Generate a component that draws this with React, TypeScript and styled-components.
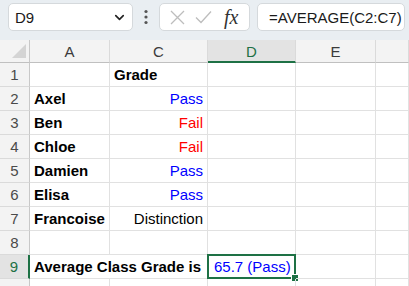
import { Fragment } from 'react';
import styled, { createGlobalStyle } from 'styled-components';
import { ChevronDown } from 'lucide-react';

const GREEN = '#1e7145';
const GRID = '#e1e1e1';

const Global = createGlobalStyle`
  html, body {
    margin: 0;
    padding: 0;
    background: #ffffff;
    font-family: "Liberation Sans", Arial, sans-serif;
    overflow: hidden;
  }
  * { box-sizing: border-box; }
`;

const Bar = styled.div`
  display: flex;
  align-items: flex-start;
  height: 40px;
  padding: 3px 0 0 8px;
  background: #e9eef2;
`;

const Field = styled.div<{ $w: number }>`
  display: flex;
  align-items: center;
  width: ${(p) => p.$w}px;
  height: 28px;
  background: #ffffff;
  border: 1px solid #d5d9dc;
  border-radius: 5px;
  font-size: 15px;
  color: #1a1a1a;
`;

const NameBox = styled(Field)`
  justify-content: space-between;
  padding: 0 5px 0 6px;
`;

const Dots = styled.div`
  width: 26px;
  height: 28px;
  display: flex;
  align-items: center;
  justify-content: center;
`;

const FxBox = styled(Field)`
  gap: 10px;
  padding: 0 0 0 10px;
`;

const Fx = styled.span`
  font-family: "Liberation Serif", "Times New Roman", serif;
  font-style: italic;
  font-size: 20px;
  color: #333333;
  margin-left: 2px;
`;

const FormulaBox = styled(Field)`
  margin-left: 7px;
  padding-left: 11px;
  white-space: nowrap;
`;

const Sheet = styled.div`
  display: grid;
  grid-template-columns: 30px 80px 98px 88px 80px 1fr;
  grid-template-rows: 23px;
  grid-auto-rows: 24px;
`;

const Corner = styled.div`
  background: #f3f3f3;
  border-right: 1px solid #c8c8c8;
  border-bottom: 1px solid #c0c0c0;
  display: flex;
  align-items: flex-end;
  justify-content: flex-end;
  padding: 0 3px 4px 0;
`;

const ColHead = styled.div<{ $active?: boolean }>`
  background: ${(p) => (p.$active ? '#e3e3e3' : '#f3f3f3')};
  border-right: 1px solid #dadada;
  border-bottom: ${(p) => (p.$active ? `2px solid ${GREEN}` : '1px solid #c0c0c0')};
  color: ${(p) => (p.$active ? GREEN : '#3b3b3b')};
  font-size: 15px;
  display: flex;
  align-items: center;
  justify-content: center;
  padding-top: ${(p) => (p.$active ? '1px' : '0')};
`;

const RowHead = styled.div<{ $active?: boolean }>`
  background: ${(p) => (p.$active ? '#e3e3e3' : '#f3f3f3')};
  border-right: ${(p) => (p.$active ? `2px solid ${GREEN}` : '1px solid #c8c8c8')};
  border-bottom: 1px solid #dadada;
  color: ${(p) => (p.$active ? GREEN : '#4a4a4a')};
  font-size: 15px;
  display: flex;
  align-items: center;
  justify-content: center;
`;

const Cell = styled.div<{
  $align?: string;
  $bold?: boolean;
  $color?: string;
  $selected?: boolean;
  $span?: number;
}>`
  position: relative;
  grid-column: span ${(p) => p.$span ?? 1};
  border-right: 1px solid ${GRID};
  border-bottom: 1px solid ${GRID};
  padding: 0 ${(p) => (p.$selected ? '6px' : '4px')};
  font-size: 15px;
  line-height: 23px;
  white-space: nowrap;
  text-align: ${(p) => p.$align ?? 'left'};
  font-weight: ${(p) => (p.$bold ? 700 : 400)};
  color: ${(p) => p.$color ?? '#000000'};
  overflow: ${(p) => (p.$selected ? 'visible' : 'hidden')};
`;

const Selection = styled.div`
  position: absolute;
  top: -1px;
  left: -1px;
  right: -1px;
  bottom: -1px;
  border: 2px solid ${GREEN};
  pointer-events: none;
`;

const Handle = styled.div`
  position: absolute;
  right: -4px;
  bottom: -4px;
  width: 6px;
  height: 6px;
  background: ${GREEN};
  outline: 1px solid #ffffff;
`;

type Row = { a?: string; c?: string; cColor?: string; cAlign?: string; cBold?: boolean };

const rows: Row[] = [
  { c: 'Grade', cBold: true, cAlign: 'left' },
  { a: 'Axel', c: 'Pass', cColor: '#0000ff', cAlign: 'right' },
  { a: 'Ben', c: 'Fail', cColor: '#ff0000', cAlign: 'right' },
  { a: 'Chloe', c: 'Fail', cColor: '#ff0000', cAlign: 'right' },
  { a: 'Damien', c: 'Pass', cColor: '#0000ff', cAlign: 'right' },
  { a: 'Elisa', c: 'Pass', cColor: '#0000ff', cAlign: 'right' },
  { a: 'Francoise', c: 'Distinction', cAlign: 'right' },
  {},
];

const App = () => (
  <>
    <Global />
    <Bar>
      <NameBox $w={125}>
        <span>D9</span>
        <ChevronDown size={15} strokeWidth={2.6} color="#222" />
      </NameBox>
      <Dots>
        <svg width="4" height="16" viewBox="0 0 4 16">
          <circle cx="2" cy="2.5" r="1.6" fill="#555" />
          <circle cx="2" cy="8" r="1.6" fill="#555" />
          <circle cx="2" cy="13.5" r="1.6" fill="#555" />
        </svg>
      </Dots>
      <FxBox $w={91}>
        <svg width="15" height="15" viewBox="0 0 15 15">
          <path d="M1 1 L14 14 M14 1 L1 14" stroke="#bdbdbd" strokeWidth="1.3" fill="none" />
        </svg>
        <svg width="17" height="14" viewBox="0 0 17 14">
          <path d="M1 7.5 L6 12.5 L16 1.5" stroke="#bdbdbd" strokeWidth="1.3" fill="none" />
        </svg>
        <Fx>fx</Fx>
      </FxBox>
      <FormulaBox $w={148}>=AVERAGE(C2:C7)</FormulaBox>
    </Bar>
    <Sheet>
      <Corner>
        <svg width="14" height="14" viewBox="0 0 14 14">
          <polygon points="14,0 14,14 0,14" fill="#d4d4d4" />
        </svg>
      </Corner>
      <ColHead>A</ColHead>
      <ColHead>C</ColHead>
      <ColHead $active>D</ColHead>
      <ColHead>E</ColHead>
      <ColHead />
      {rows.map((r, i) => (
        <Fragment key={i}>
          <RowHead>{i + 1}</RowHead>
          <Cell $bold>{r.a}</Cell>
          <Cell $bold={r.cBold} $color={r.cColor} $align={r.cAlign}>
            {r.c}
          </Cell>
          <Cell />
          <Cell />
          <Cell />
        </Fragment>
      ))}
      <RowHead $active>9</RowHead>
      <Cell $bold $span={2}>Average Class Grade is</Cell>
      <Cell $selected $color="#0000ff">
        65.7 (Pass)
        <Selection>
          <Handle />
        </Selection>
      </Cell>
      <Cell />
      <Cell />
      <RowHead />
      <Cell />
      <Cell />
      <Cell />
      <Cell />
      <Cell />
    </Sheet>
  </>
);

export default App;
